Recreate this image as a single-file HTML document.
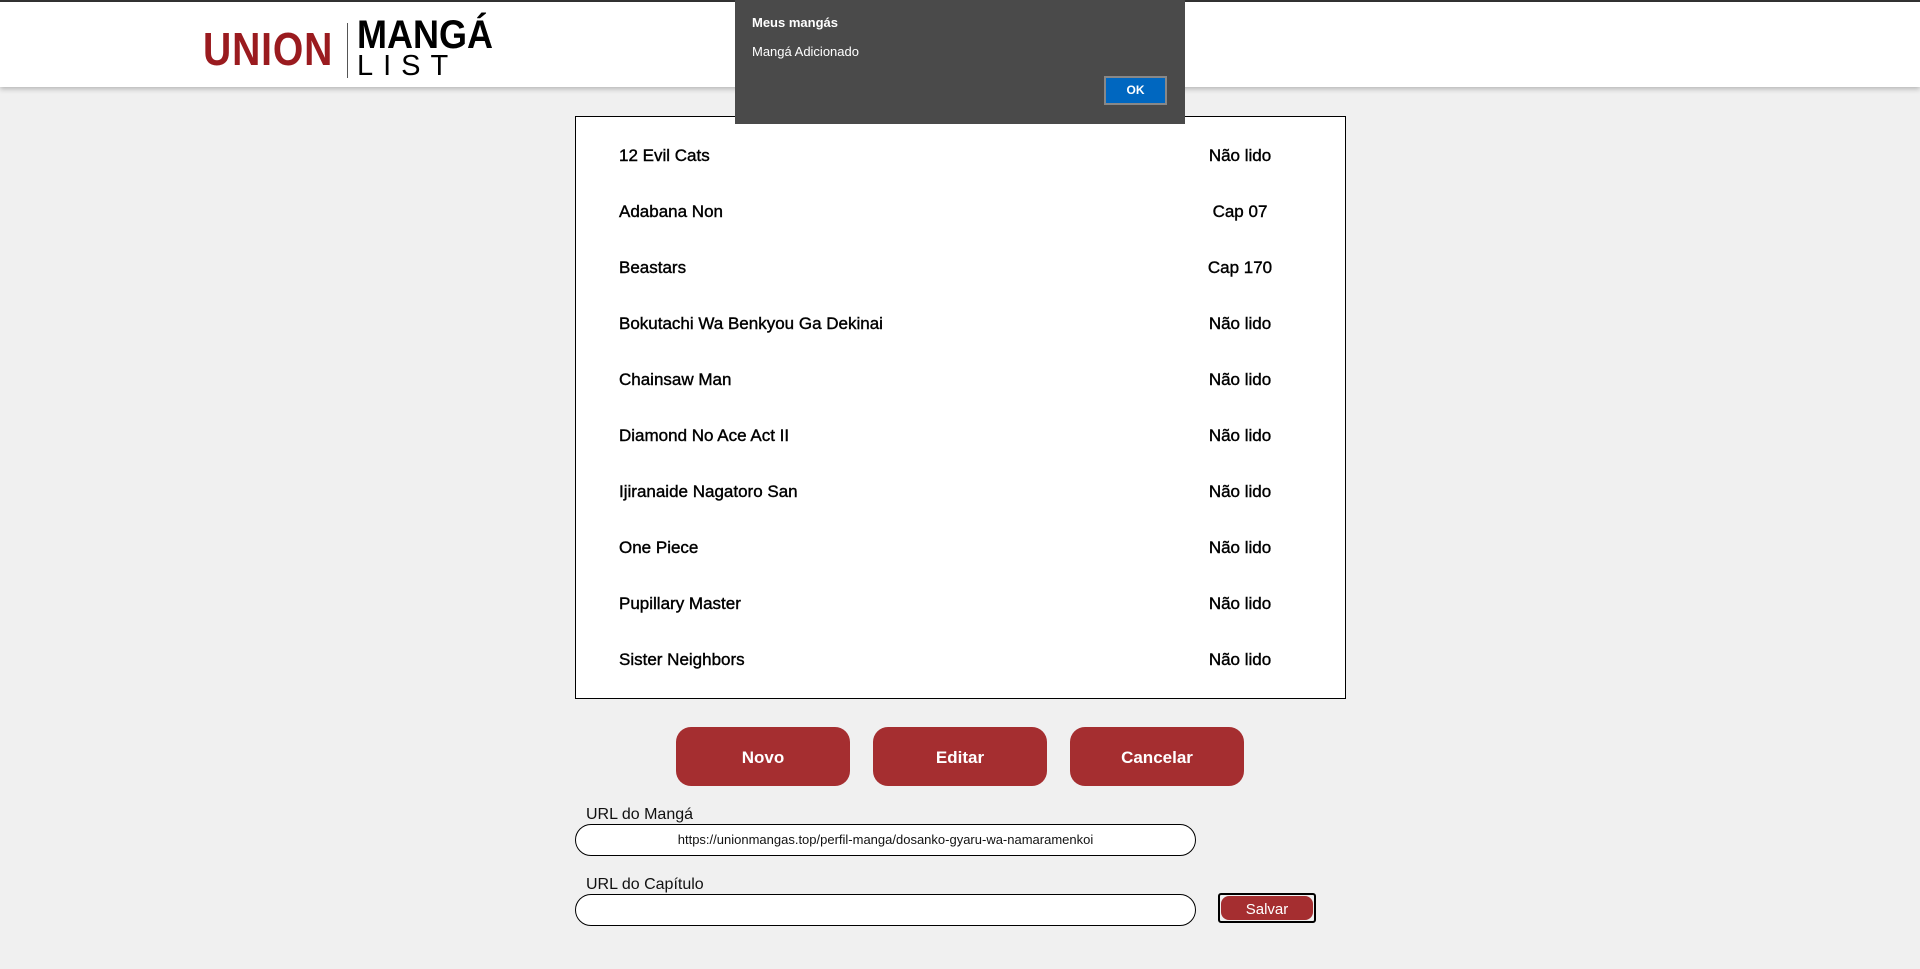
<!DOCTYPE html>
<html><head><meta charset="utf-8"><style>
*{margin:0;padding:0;box-sizing:border-box}
body{width:1920px;height:969px;background:#f0f0f0;font-family:"Liberation Sans",sans-serif;position:relative;overflow:hidden}
.topline{position:absolute;left:0;top:0;width:1920px;height:2px;background:#333}
.header{position:absolute;left:0;top:2px;width:1920px;height:85px;background:#fff;box-shadow:0 2px 5px rgba(0,0,0,.25)}
.union{position:absolute;left:203px;top:20px;font-size:46px;font-weight:bold;color:#9a1b1f;transform:scaleX(.85);transform-origin:left;letter-spacing:1px}
.div{position:absolute;left:347px;top:21px;width:1px;height:55px;background:#555}
.manga{position:absolute;left:357px;top:11px;font-size:40px;font-weight:bold;color:#000;transform:scaleX(.9);transform-origin:left}
.list{position:absolute;left:357px;top:48px;font-size:29px;color:#000;letter-spacing:10px}
.dlg{position:absolute;left:735px;top:0;width:450px;height:124px;background:#4a4a4a;color:#fff;z-index:5}
.dlg .t{position:absolute;left:17px;top:15px;font-size:13px;font-weight:bold}
.dlg .m{position:absolute;left:17px;top:44px;font-size:13px}
.dlg .ok{position:absolute;left:369px;top:76px;width:63px;height:29px;background:#0067c0;border:2px solid #888;font-size:12px;font-weight:bold;text-align:center;line-height:25px}
.box{position:absolute;left:575px;top:116px;width:771px;height:583px;background:#fff;border:1px solid #000}
.row{position:absolute;left:43px;font-size:17px;color:#000;-webkit-text-stroke:0.4px #000}
.st{position:absolute;left:600px;width:128px;text-align:center;font-size:17px;-webkit-text-stroke:0.4px #000}
.btn{position:absolute;top:727px;width:174px;height:59px;background:#a52e30;border-radius:15px;color:#fff;font-weight:bold;font-size:17px;text-align:center;line-height:61px}
.lbl{position:absolute;left:586px;font-size:16px;color:#111}
.inp{position:absolute;left:575px;width:621px;height:32px;background:#fff;border:1px solid #000;border-radius:16px;font-size:13px;text-align:center;line-height:30px;color:#111}
.salvar{position:absolute;left:1218px;top:893px;width:98px;height:30px;border:2px solid #000;border-radius:3px;background:#f0f0f0}
.salvar div{position:absolute;left:1px;top:1px;right:1px;bottom:1px;background:#a52e30;border-radius:8px;color:#fff;font-size:15px;text-align:center;line-height:27px}
</style></head><body>
<div class="topline"></div>
<div class="header">
<div class="union">UNION</div><div class="div"></div>
<div class="manga">MANGÁ</div><div class="list">LIST</div>
</div>
<div class="box">
<div class="row" style="top:29px">12 Evil Cats</div><div class="st" style="top:29px">Não lido</div>
<div class="row" style="top:85px">Adabana Non</div><div class="st" style="top:85px">Cap 07</div>
<div class="row" style="top:141px">Beastars</div><div class="st" style="top:141px">Cap 170</div>
<div class="row" style="top:197px">Bokutachi Wa Benkyou Ga Dekinai</div><div class="st" style="top:197px">Não lido</div>
<div class="row" style="top:253px">Chainsaw Man</div><div class="st" style="top:253px">Não lido</div>
<div class="row" style="top:309px">Diamond No Ace Act II</div><div class="st" style="top:309px">Não lido</div>
<div class="row" style="top:365px">Ijiranaide Nagatoro San</div><div class="st" style="top:365px">Não lido</div>
<div class="row" style="top:421px">One Piece</div><div class="st" style="top:421px">Não lido</div>
<div class="row" style="top:477px">Pupillary Master</div><div class="st" style="top:477px">Não lido</div>
<div class="row" style="top:533px">Sister Neighbors</div><div class="st" style="top:533px">Não lido</div>
</div>
<div class="dlg"><div class="t">Meus mangás</div><div class="m">Mangá Adicionado</div><div class="ok">OK</div></div>
<div class="btn" style="left:676px">Novo</div>
<div class="btn" style="left:873px">Editar</div>
<div class="btn" style="left:1070px">Cancelar</div>
<div class="lbl" style="top:806px">URL do Mangá</div>
<div class="inp" style="top:824px">https://unionmangas.top/perfil-manga/dosanko-gyaru-wa-namaramenkoi</div>
<div class="lbl" style="top:876px">URL do Capítulo</div>
<div class="inp" style="top:894px"></div>
<div class="salvar"><div>Salvar</div></div>
</body></html>
